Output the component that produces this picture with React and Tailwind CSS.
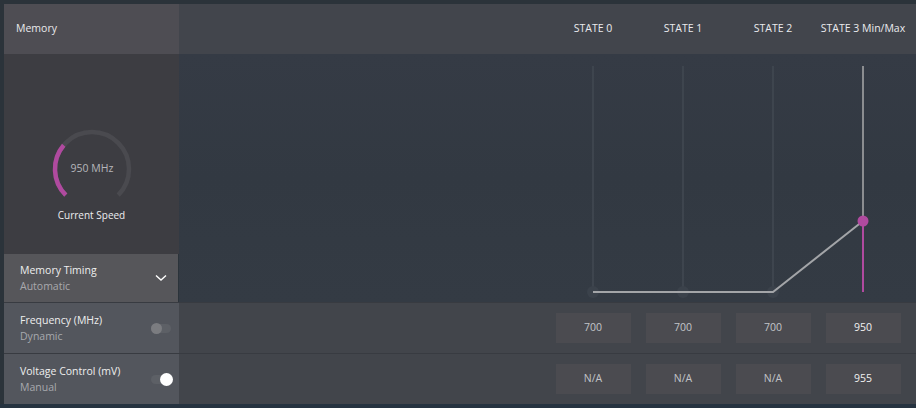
import React from "react";

const F = { fontFamily: '"Open Sans", "Noto Sans", sans-serif' };

function Gauge() {
  return (
    <svg width="84" height="84" viewBox="0 0 84 84">
      <path d="M 15.8 68.2 A 37 37 0 1 1 68.2 68.2" fill="none" stroke="#4a4a4f" strokeWidth="4.5" />
      <path d="M 15.8 68.2 A 37 37 0 0 1 13.7 18.2" fill="none" stroke="#b04a9f" strokeWidth="4.5" />
    </svg>
  );
}

function Toggle({ on }) {
  return (
    <div className="relative w-[20px] h-[9px] rounded-full bg-[#5d6066]">
      {on ? (
        <div className="absolute right-[-2px] top-[-2px] w-[13px] h-[13px] rounded-full bg-white" />
      ) : (
        <div className="absolute left-0 top-[-1px] w-[11px] h-[11px] rounded-full bg-[#7b7c80]" />
      )}
    </div>
  );
}

function Row({ title, sub, on, values }) {
  return (
    <div className="flex h-[50px]">
      <div className="w-[175px] bg-[#53565d] flex items-center justify-between pl-[16px] pr-[8px]">
        <div className="flex flex-col leading-none">
          <span className="text-[10.5px] text-[#eeeeee]">{title}</span>
          <span className="text-[10.5px] text-[#a7a9ad] mt-[6px]">{sub}</span>
        </div>
        <Toggle on={on} />
      </div>
      <div className="flex-1 bg-[#42454b] pl-[369px] grid grid-cols-[repeat(4,90px)] items-center">
        {values.map((v, i) => (
          <div key={i} className="flex justify-center">
            <div
              className={`w-[75px] h-[30px] bg-[#4b4b50] flex items-center justify-center text-[10.5px] ${
                i === 3 ? "text-[#f2f2f2]" : "text-[#c2c4c8]"
              }`}
            >
              {v}
            </div>
          </div>
        ))}
      </div>
    </div>
  );
}

function Chart() {
  const xs = [414, 504, 594, 684];
  return (
    <svg width="737" height="248" viewBox="0 0 737 248" className="absolute left-0 top-0">
      {xs.slice(0, 3).map((x) => (
        <line key={x} x1={x} y1="12" x2={x} y2="238" stroke="#3e454e" strokeWidth="2" />
      ))}
      {xs.slice(0, 3).map((x) => (
        <circle key={"c" + x} cx={x} cy="238" r="6" fill="#3b424b" />
      ))}
      <line x1="684" y1="12" x2="684" y2="167" stroke="#8b8d90" strokeWidth="2" />
      <polyline points="414,238 594,238 684,167" fill="none" stroke="#a3a5a8" strokeWidth="2" />
      <line x1="684" y1="167" x2="684" y2="238" stroke="#b04a9f" strokeWidth="2" />
      <circle cx="684" cy="167" r="5.5" fill="#b04a9f" />
    </svg>
  );
}

export default function App() {
  return (
    <div style={F} className="w-[916px] h-[408px] bg-[#2b333a] pt-[4px] pl-[4px] overflow-hidden">
      <div className="flex">
        <div className="w-[175px] flex flex-col">
          <div className="h-[50px] bg-[#4e4d53] flex items-center pl-[12px] text-[10.5px] text-[#e9e9ec]">
            Memory
          </div>
          <div className="h-[200px] bg-[#3d3d42] flex flex-col items-center pt-[73px]">
            <div className="relative w-[84px] h-[84px]">
              <Gauge />
              <div className="absolute inset-0 flex items-center justify-center pl-[1px] text-[10.5px] text-[#b6b6ba]">
                950 MHz
              </div>
            </div>
            <div className="mt-[-3px] text-[10px] text-[#ededf0]">Current Speed</div>
          </div>
          <div className="h-[48px] w-[174px] bg-[#56565a] flex items-center justify-between pl-[16px] pr-[11px]">
            <div className="flex flex-col leading-none">
              <span className="text-[10.5px] text-[#eeeeee]">Memory Timing</span>
              <span className="text-[10.5px] text-[#a9a9ad] mt-[6px]">Automatic</span>
            </div>
            <svg width="12" height="8" viewBox="0 0 12 8">
              <polyline points="1,1.5 6,6 11,1.5" fill="none" stroke="#ffffff" strokeWidth="1.4" />
            </svg>
          </div>
        </div>
        <div className="flex-1 flex flex-col">
          <div className="h-[50px] bg-[#42454c] pl-[369px] grid grid-cols-[repeat(4,90px)] items-center text-[10.5px] text-[#ebebee]">
            <div className="text-center">STATE 0</div>
            <div className="text-center">STATE 1</div>
            <div className="text-center">STATE 2</div>
            <div className="text-center whitespace-nowrap">STATE 3 Min/Max</div>
          </div>
          <div className="relative h-[248px] bg-gradient-to-b from-[#353b45] via-[#323942] to-[#343b44]">
            <Chart />
          </div>
        </div>
      </div>
      <div className="h-[1px] bg-[#383b41]" />
      <Row title="Frequency (MHz)" sub="Dynamic" on={false} values={["700", "700", "700", "950"]} />
      <div className="h-[1px] bg-[#383b41]" />
      <Row title="Voltage Control (mV)" sub="Manual" on={true} values={["N/A", "N/A", "N/A", "955"]} />
      <div className="h-[4px] bg-[#263340] -ml-[4px]" />
    </div>
  );
}
